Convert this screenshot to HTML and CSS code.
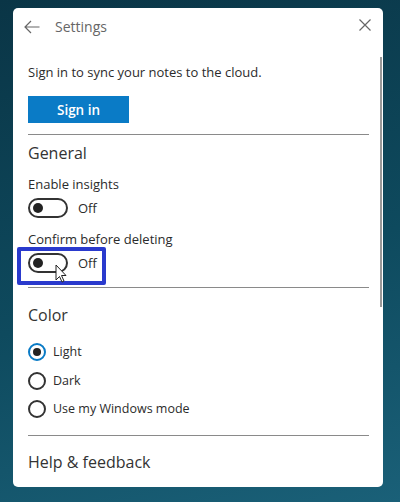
FILE: index.html
```html
<!DOCTYPE html>
<html>
<head>
<meta charset="utf-8">
<link rel="stylesheet" href="styles.css">
</head>
<body>
<div class="panel">
  <div class="header">
    <svg class="back" width="16" height="14" viewBox="0 0 16 14"><path d="M15.5 7H1.2M7 1L1 7l6 6" fill="none" stroke="#666" stroke-width="1.2"/></svg>
    <span class="title">Settings</span>
    <svg class="close" width="12" height="12" viewBox="0 0 12 12"><path d="M0.5 0.5l11 11M11.5 0.5l-11 11" fill="none" stroke="#666" stroke-width="1.2"/></svg>
  </div>
  <div class="scrollbar"></div>
  <div class="content">
    <p class="text sync">Sign in to sync your notes to the cloud.</p>
    <button class="signin">Sign in</button>
    <hr class="divider d1">
    <h2 class="heading general">General</h2>
    <p class="text label l1">Enable insights</p>
    <div class="toggle-row">
      <span class="toggle"><span class="knob"></span></span>
      <span class="text">Off</span>
    </div>
    <p class="text label l2">Confirm before deleting</p>
    <div class="toggle-row focused">
      <span class="toggle"><span class="knob"></span></span>
      <span class="text">Off</span>
      <span class="focus-box"></span>
      <svg class="cursor" width="12" height="19" viewBox="0 0 12 19"><path d="M1 1v15l3.5-3.5 2.5 5.5 2-1-2.5-5.5H11z" fill="#fff" stroke="#222" stroke-width="1"/></svg>
    </div>
    <hr class="divider d2">
    <h2 class="heading color">Color</h2>
    <div class="radio-row r1"><span class="radio checked"><span class="dot"></span></span><span class="text small">Light</span></div>
    <div class="radio-row r2"><span class="radio"></span><span class="text small">Dark</span></div>
    <div class="radio-row r3"><span class="radio"></span><span class="text small">Use my Windows mode</span></div>
    <hr class="divider d3">
    <h2 class="heading help">Help &amp; feedback</h2>
  </div>
</div>
</body>
</html>
```
FILE: styles.css
```css
html, body { margin: 0; padding: 0; }
body {
  width: 400px;
  height: 502px;
  overflow: hidden;
  background: linear-gradient(165deg, #0a3546 0%, #0e4a5e 55%, #1a6078 100%);
  font-family: "Open Sans", "Noto Sans", sans-serif;
  color: #2b2b2b;
}
.panel {
  position: relative;
  margin: 8px 0 0 13px;
  width: 370px;
  height: 479px;
  background: #fff;
  border-radius: 5px;
  overflow: hidden;
}
.header {
  height: 36px;
  display: flex;
  align-items: center;
  padding: 0 12px 0 11px;
}
.back { display: block; margin-top: 1px; }
.title {
  margin-left: 15px;
  font-size: 14px;
  color: #666;
  flex: 1;
}
.close { display: block; margin-top: -2px; }
.scrollbar {
  position: absolute;
  left: 367px;
  top: 49px;
  width: 2px;
  height: 250px;
  background: #999;
}
.content { padding: 0 14px 0 15px; }
.text { font-size: 13px; line-height: 20px; color: #2b2b2b; margin: 0; }
.text.small { font-size: 12.5px; }
.sync { margin-top: 18px; }
.signin {
  display: block;
  margin-top: 14px;
  width: 101px;
  height: 27px;
  border: 0;
  padding: 0;
  background: #0a7bc6;
  color: #fff;
  font-family: "Open Sans", "Noto Sans", sans-serif;
  font-size: 13.5px;
  font-weight: 600;
}
.divider {
  border: 0;
  height: 1px;
  background: #8a8a8a;
  margin: 0;
}
.d1 { margin-top: 11px; }
.heading {
  font-size: 16px;
  font-weight: 400;
  line-height: 24px;
  margin: 0;
  color: #333;
}
.general { margin-top: 6px; }
.l1 { margin-top: 9px; }
.toggle-row {
  position: relative;
  display: flex;
  align-items: center;
  height: 20px;
  margin-top: 4px;
}
.toggle {
  box-sizing: border-box;
  width: 40px;
  height: 20px;
  border: 2px solid #333;
  border-radius: 10px;
  display: flex;
  align-items: center;
  padding-left: 3px;
  margin-right: 10px;
}
.knob {
  width: 10px;
  height: 10px;
  border-radius: 50%;
  background: #222;
}
.l2 { margin-top: 11px; }
.focus-box {
  position: absolute;
  left: -11px;
  top: -6px;
  width: 89px;
  height: 38px;
  box-sizing: border-box;
  border: 4px solid #2a3acd;
  border-radius: 2px;
}
.cursor {
  position: absolute;
  left: 27px;
  top: 11px;
}
.d2 { margin-top: 14px; }
.color { margin-top: 15px; }
.radio-row {
  display: flex;
  align-items: center;
  height: 20px;
}
.r1 { margin-top: 15px; }
.r2 { margin-top: 9px; }
.r3 { margin-top: 8px; }
.radio {
  box-sizing: border-box;
  width: 18px;
  height: 18px;
  border: 2px solid #333;
  border-radius: 50%;
  margin-right: 7px;
  display: flex;
  align-items: center;
  justify-content: center;
}
.radio.checked { border-color: #0a7bc6; }
.dot {
  width: 8px;
  height: 8px;
  border-radius: 50%;
  background: #222;
}
.d3 { margin-top: 16px; }
.help { margin-top: 14px; }
```
